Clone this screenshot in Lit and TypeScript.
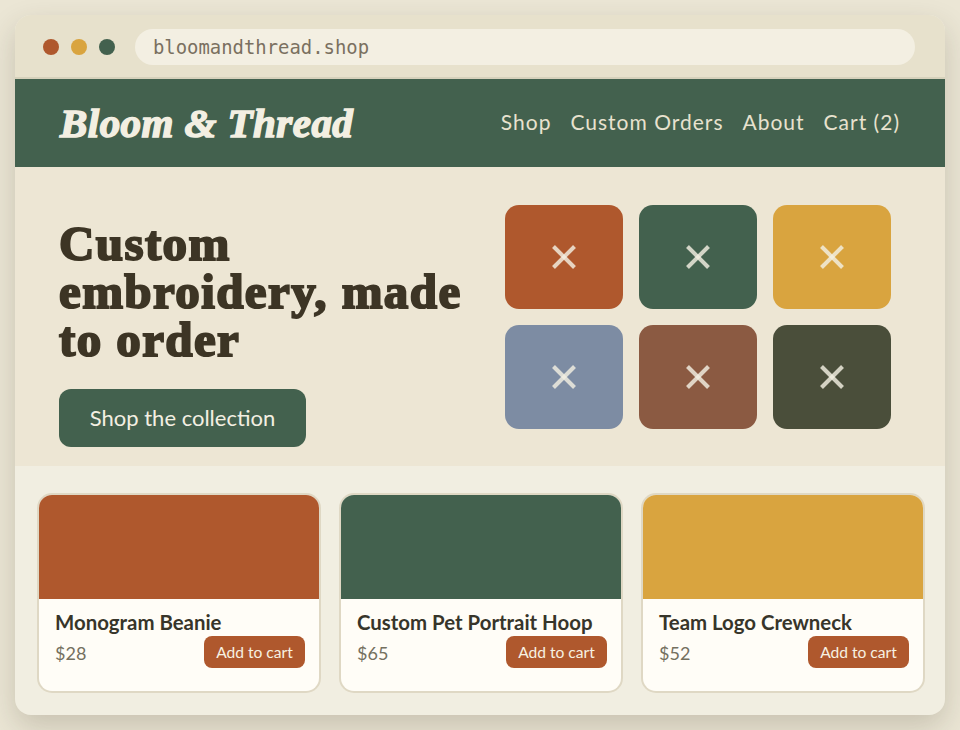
import { LitElement, html, css, svg } from "lit";
import { customElement } from "lit/decorators.js";

const tiles = ["#af582d", "#43614e", "#d9a43f", "#7d8ca3", "#8b5a42", "#4a4e3a"];
const dots = ["#af582d", "#d9a43f", "#43614e"];
const products = [
  { name: "Monogram Beanie", price: "$28", color: "#af582d" },
  { name: "Custom Pet Portrait Hoop", price: "$65", color: "#43614e" },
  { name: "Team Logo Crewneck", price: "$52", color: "#d9a43f" },
];

@customElement("app-root")
export class AppRoot extends LitElement {
  static styles = css`
    :host { display: block; height: 730px; background: #ebe6d5; padding: 15px; box-sizing: border-box; font-family: Lato, sans-serif; }
    .window { height: 700px; border-radius: 16px; overflow: hidden; display: flex; flex-direction: column; box-shadow: 0 12px 30px rgba(60,50,30,.2); background: #f1eee1; }
    .bar { box-sizing: border-box; height: 64px; display: flex; align-items: center; padding: 1px 30px 0 28px; gap: 20px; background: #e7e1cc; border-bottom: 2px solid #d6d1bb; }
    .dots { display: flex; gap: 12px; }
    .dot { width: 16px; height: 16px; border-radius: 50%; }
    .url { flex: 1; height: 36px; border-radius: 18px; background: #f3efe2; display: flex; align-items: center; padding: 0 18px; font: 18.9px "DejaVu Sans Mono", monospace; color: #7a7060; }
    header { height: 88px; box-sizing: border-box; background: #43614e; display: flex; align-items: center; justify-content: space-between; padding: 0 45px; }
    .logo { font: italic 700 41px "Liberation Serif", serif; color: #f3efe2; -webkit-text-stroke: 1.5px #f3efe2; letter-spacing: 0.45px; }
    nav { display: flex; gap: 19px; font-size: 21px; letter-spacing: 1px; color: #e8e2cf; margin-top: -4px; }
    .hero { height: 299px; box-sizing: border-box; background: #ede6d4; display: flex; padding-left: 44px; }
    .copy { width: 446px; padding-top: 53px; }
    h1 { margin: 0 0 25px; width: 420px; font: 700 49px/48px "Liberation Serif", serif; letter-spacing: 1.4px; color: #3d3525; -webkit-text-stroke: 2px #3d3525; }
    .cta { display: inline-flex; align-items: center; justify-content: center; box-sizing: border-box; width: 247px; height: 58px; padding-bottom: 2px; border-radius: 12px; background: #43614e; color: #f3efe2; font-size: 22px; }
    .tiles { padding-top: 38px; display: grid; grid-template-columns: repeat(3, 118px); grid-auto-rows: 104px; gap: 16px; }
    .tile { border-radius: 14px; display: flex; align-items: center; justify-content: center; }
    .tile svg { width: 26px; height: 26px; stroke: rgba(243,239,226,.82); stroke-width: 4; }
    .products { flex: 1; display: grid; grid-template-columns: repeat(3, 280px); gap: 22px; padding: 29px 0 24px 24px; }
    .card { box-shadow: 0 0 0 2px #dfd8c4; border-radius: 13px; background: #fffdf7; overflow: hidden; display: flex; flex-direction: column; }
    .img { height: 104px; }
    .body { padding: 11px 14px 0 16px; }
    .name { font-size: 20.4px; font-weight: 700; line-height: 24px; color: #37352a; }
    .row { display: flex; justify-content: space-between; align-items: center; margin-top: 2px; }
    .price { font-size: 18px; color: #74705f; padding-top: 2px; }
    .add { width: 101px; height: 32px; border-radius: 8px; background: #af582d; color: #f7f1e2; font-size: 15.6px; display: flex; align-items: center; justify-content: center; }
  `;

  render() {
    const x = svg`<line x1="2.5" y1="2.5" x2="23.5" y2="23.5"/><line x1="23.5" y1="2.5" x2="2.5" y2="23.5"/>`;
    return html`<div class="window">
      <div class="bar">
        <div class="dots">${dots.map((c) => html`<div class="dot" style="background:${c}"></div>`)}</div>
        <div class="url">bloomandthread.shop</div>
      </div>
      <header>
        <div class="logo">Bloom &amp; Thread</div>
        <nav><span>Shop</span><span>Custom Orders</span><span>About</span><span>Cart (2)</span></nav>
      </header>
      <section class="hero">
        <div class="copy">
          <h1>Custom embroidery, made to order</h1>
          <div class="cta">Shop the collection</div>
        </div>
        <div class="tiles">
          ${tiles.map((c) => html`<div class="tile" style="background:${c}"><svg viewBox="0 0 26 26">${x}</svg></div>`)}
        </div>
      </section>
      <section class="products">
        ${products.map((p) => html`<div class="card">
          <div class="img" style="background:${p.color}"></div>
          <div class="body">
            <div class="name">${p.name}</div>
            <div class="row"><span class="price">${p.price}</span><span class="add">Add to cart</span></div>
          </div>
        </div>`)}
      </section>
    </div>`;
  }
}
